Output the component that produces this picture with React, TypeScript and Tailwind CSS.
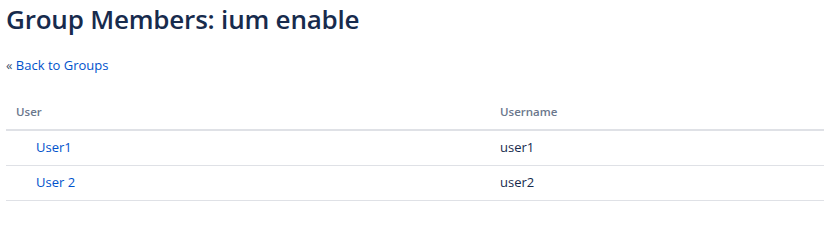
const members = [
  { name: "User1", username: "user1" },
  { name: "User 2", username: "user2" },
];

export default function App() {
  return (
    <div className="bg-white px-[6px] pt-[2px] text-[#172b4d] font-['Open_Sans',sans-serif]">
      <h1 className="text-[26px] leading-[34px] font-semibold tracking-[-0.2px]">
        Group Members: ium enable
      </h1>
      <p className="mt-[19px] text-[13px] leading-[20px]">
        <span className="text-[#42526e]">« </span>
        <a href="#" className="text-[#0052cc]">
          Back to Groups
        </a>
      </p>
      <table className="mt-[20px] w-[818px] border-collapse text-[13px]">
        <thead>
          <tr className="border-b-2 border-[#dfe1e6]">
            <th className="w-[484px] px-[10px] pt-[8px] pb-[9px] text-left text-[11.5px] font-semibold text-[#6b778c]">
              User
            </th>
            <th className="px-[10px] pt-[8px] pb-[9px] text-left text-[11.5px] font-semibold text-[#6b778c]">
              Username
            </th>
          </tr>
        </thead>
        <tbody>
          {members.map((m) => (
            <tr key={m.username} className="border-b border-[#dfe1e6]">
              <td className="h-[35px] pl-[30px] pr-[10px]">
                <a href="#" className="text-[#0052cc]">
                  {m.name}
                </a>
              </td>
              <td className="h-[35px] px-[10px]">{m.username}</td>
            </tr>
          ))}
        </tbody>
      </table>
    </div>
  );
}
